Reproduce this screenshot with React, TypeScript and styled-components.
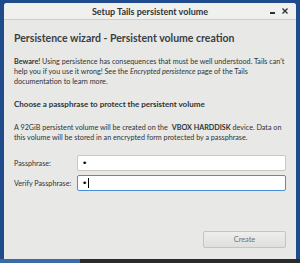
import styled, { createGlobalStyle } from 'styled-components'

const GlobalStyle = createGlobalStyle`
  html, body {
    margin: 0;
    padding: 0;
    width: 300px;
    height: 263px;
    overflow: hidden;
  }
  body {
    background: #1f4a8c;
    font-family: Lato, "Open Sans", "Noto Sans", sans-serif;
    color: #2e3436;
  }
`

const App: React.FC = () => {
  return (
    <Screen>
      <GlobalStyle />
      <Window>
        <TitleBar>
          <TitleText>Setup Tails persistent volume</TitleText>
          <TitleButtons>
            <Minimize />
            <CloseIcon viewBox='0 0 8 8'>
              <path d='M1.5 1.5 L6.5 6.5 M6.5 1.5 L1.5 6.5' stroke='#2e3436' strokeWidth='1.4' />
            </CloseIcon>
          </TitleButtons>
        </TitleBar>

        <Content>
          <Heading>Persistence wizard - Persistent volume creation</Heading>
          <Para $gap={12}>
            <b>Beware!</b> Using persistence has consequences that must be well understood. Tails can't help you if you use it wrong! See the <i>Encrypted persistence</i> page of the Tails documentation to learn more.
          </Para>

          <SubHeading>Choose a passphrase to protect the persistent volume</SubHeading>
          <Para $gap={14}>
            A 92GiB persistent volume will be created on the <Device>VBOX HARDDISK</Device> device. Data on this volume will be stored in an encrypted form protected by a passphrase.
          </Para>

          <Form>
            <Label>Passphrase:</Label>
            <Field>•</Field>
            <Label>Verify Passphrase:</Label>
            <Field $focused>•<Caret /></Field>
          </Form>

          <Footer>
            <CreateButton>Create</CreateButton>
          </Footer>
        </Content>
      </Window>
      <Taskbar>
        <TaskActive />
      </Taskbar>
    </Screen>
  )
}

export default App

const Screen = styled.div`
  width: 300px;
  height: 263px;
  display: flex;
  flex-direction: column;
  background: #1f4a8c;
  padding-top: 3px;
  box-sizing: border-box;
`

const Window = styled.div`
  margin: 0 4px;
  height: 256px;
  display: flex;
  flex-direction: column;
  background: #e8e8e7;
  border-radius: 3px 3px 0 0;
  overflow: hidden;
`

const TitleBar = styled.div`
  height: 16px;
  flex-shrink: 0;
  display: flex;
  align-items: center;
  justify-content: center;
  position: relative;
  background: #f0f0ef;
  border-bottom: 1px solid #cdcdcb;
`

const TitleText = styled.span`
  font-size: 9px;
  font-weight: 700;
  color: #2e3436;
`

const TitleButtons = styled.div`
  position: absolute;
  right: 7px;
  top: 4px;
  display: flex;
  align-items: center;
  gap: 6px;
`

const Minimize = styled.span`
  width: 5px;
  height: 2px;
  margin-top: 4px;
  background: #2e3436;
`

const CloseIcon = styled.svg`
  width: 8px;
  height: 8px;
`

const Content = styled.div`
  flex: 1;
  display: flex;
  flex-direction: column;
  padding: 11px 10px 11px 10px;
`

const Heading = styled.div`
  font-size: 10.5px;
  font-weight: 700;
  color: #3a3f41;
  line-height: 14px;
`

const Para = styled.p<{ $gap: number }>`
  margin: ${props => props.$gap}px 0 0;
  font-size: 7.2px;
  line-height: 10px;
  color: #2e3436;

  b { font-weight: 700; }
`

const SubHeading = styled.div`
  margin-top: 12px;
  font-size: 8px;
  font-weight: 700;
  line-height: 10px;
  color: #2e3436;
`

const Device = styled.b`
  font-weight: 700;
  margin-left: 2px;
`

const Form = styled.div`
  margin-top: 12px;
  display: grid;
  grid-template-columns: 63px 1fr;
  row-gap: 4px;
  align-items: center;
`

const Label = styled.span`
  font-size: 7.2px;
  color: #2e3436;
`

const Field = styled.div<{ $focused?: boolean }>`
  height: 16px;
  box-sizing: border-box;
  background: #ffffff;
  border: 1px solid ${props => props.$focused ? '#4a90d9' : '#cdc7c2'};
  border-radius: 2px;
  display: flex;
  align-items: center;
  padding-left: 4px;
  font-size: 9px;
  font-family: "DejaVu Sans", sans-serif;
  color: #000;
`

const Caret = styled.span`
  width: 1px;
  height: 10px;
  margin-left: 1px;
  background: #000;
`

const Footer = styled.div`
  margin-top: auto;
  display: flex;
  justify-content: flex-end;
`

const CreateButton = styled.div`
  width: 83px;
  height: 17px;
  box-sizing: border-box;
  display: flex;
  align-items: center;
  justify-content: center;
  border: 1px solid #c4c4c1;
  border-radius: 2px;
  background: linear-gradient(#eeeeec, #dfdfdd);
  font-size: 7.4px;
  color: #6e7172;
`

const Taskbar = styled.div`
  flex: 1;
  display: flex;
  background: #2a2a2a;
`

const TaskActive = styled.div`
  width: 80px;
  background: #3a6aa8;
`
